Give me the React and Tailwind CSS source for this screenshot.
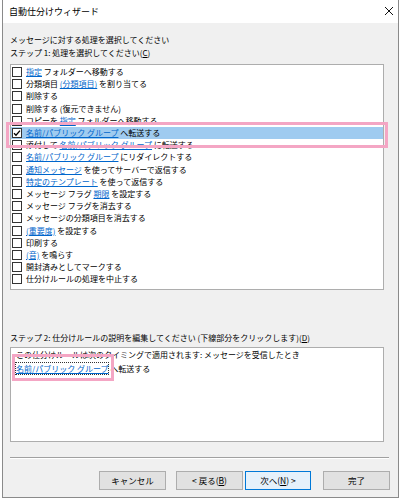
import React from 'react';

const font = { fontFamily: '"Noto Sans CJK JP", "Noto Sans", sans-serif' };

const rows = [
  [['指定', true], [' フォルダーへ移動する']],
  [['分類項目 '], ['(分類項目)', true], [' を割り当てる']],
  [['削除する']],
  [['削除する (復元できません)']],
  [['コピーを '], ['指定', true], [' フォルダーへ移動する']],
  [['名前/パブリック グループ', true], [' へ転送する']],
  [['添付して '], ['名前/パブリック グループ', true], [' に転送する']],
  [['名前/パブリック グループ', true], [' にリダイレクトする']],
  [['通知メッセージ', true], [' を使ってサーバーで返信する']],
  [['特定のテンプレート', true], [' を使って返信する']],
  [['メッセージ フラグ '], ['期限', true], [' を設定する']],
  [['メッセージ フラグを消去する']],
  [['メッセージの分類項目を消去する']],
  [['(重要度)', true], [' を設定する']],
  [['印刷する']],
  [['(音)', true], [' を鳴らす']],
  [['開封済みとしてマークする']],
  [['仕分けルールの処理を中止する']],
];

const Check = ({ checked }) => (
  <span className="w-[10px] h-[10px] border border-[#333] bg-white flex items-center justify-center shrink-0">
    {checked && (
      <svg width="8" height="8" viewBox="0 0 8 8">
        <path d="M1 4.2 L3 6.2 L7 1.6" fill="none" stroke="#000" strokeWidth="1.3" />
      </svg>
    )}
  </span>
);

const Row = ({ parts, selected }) => (
  <div className={`h-[12.2px] flex items-center gap-[4px] pl-[1px] ${selected ? 'bg-[#9fcbf0]' : ''}`}>
    <Check checked={selected} />
    <span className="whitespace-pre leading-[12px]">
      {parts.map(([t, link], i) =>
        link ? (
          <span key={i} className="text-[#0066cc] underline underline-offset-[1px]">{t}</span>
        ) : (
          <span key={i}>{t}</span>
        )
      )}
    </span>
  </div>
);

const Btn = ({ children, focus }) => (
  <button
    className={`w-full h-[19px] border text-[8.5px] leading-none flex items-center justify-center ${
      focus ? 'border-[#0078d7] bg-[#e5f1fb]' : 'border-[#adadad] bg-[#e1e1e1]'
    }`}
  >
    {children}
  </button>
);

export default function App() {
  return (
    <div className="w-[400px] h-[499px] bg-white text-black text-[8px]" style={font}>
      <div className="ml-[2px] w-[397px] h-[498px] border-l border-r border-b border-[#8a8a8a] bg-[#f0f0f0] flex flex-col">
        <div className="h-[23px] bg-white flex items-center justify-between pl-[6px] pr-[5px]">
          <span className="leading-none text-[9px]">自動仕分けウィザード</span>
          <svg width="8" height="8" viewBox="0 0 8 8" className="mb-[2px]">
            <path d="M0 0 L8 8 M8 0 L0 8" stroke="#111" strokeWidth="1" />
          </svg>
        </div>

        <div className="pl-[7px] pr-[14px] pt-[10px] flex flex-col">
          <div className="leading-[13px]">メッセージに対する処理を選択してください</div>
          <div className="leading-[13px]">
            ステップ 1: 処理を選択してください(<span className="underline">C</span>)
          </div>

          <div className="relative mt-[5px] h-[226px] border border-[#adadad] bg-white pt-[1px]">
            {rows.map((r, i) => (
              <Row key={i} parts={r} selected={i === 5} />
            ))}
            <div className="absolute left-[-5px] top-[57px] w-[382px] h-[26px] border-[3px] border-[#f4a6c4]" />
          </div>

          <div className="mt-[41px] leading-[13px]">
            ステップ 2: 仕分けルールの説明を編集してください (下線部分をクリックします)(<span className="underline">D</span>)
          </div>

          <div className="relative mt-[3px] h-[95px] border border-[#adadad] bg-white pl-[5px] leading-[14px]">
            <div>この仕分けルールは次のタイミングで適用されます: メッセージを受信したとき</div>
            <div className="whitespace-pre">
              <span className="text-[#0066cc] underline outline outline-1 outline-dotted outline-[#333]">名前/パブリック グループ</span>
              <span> へ転送する</span>
            </div>
            <div className="absolute left-[1px] top-[6px] w-[102px] h-[27px] border-[3px] border-[#f4a6c4]" />
          </div>
        </div>

        <div className="ml-[7px] mt-[15px] w-[379px] border-t border-[#a0a0a0] border-b border-b-white" />

        <div className="mt-[12px] pl-[96px] flex">
          <div className="w-[67px]"><Btn>キャンセル</Btn></div>
          <div className="w-[67px] ml-[10px]"><Btn>&lt; 戻る(<span className="underline">B</span>)</Btn></div>
          <div className="w-[66px] ml-[2px]"><Btn focus>次へ(<span className="underline">N</span>) &gt;</Btn></div>
          <div className="w-[67px] ml-[12px]"><Btn>完了</Btn></div>
        </div>
      </div>
    </div>
  );
}
